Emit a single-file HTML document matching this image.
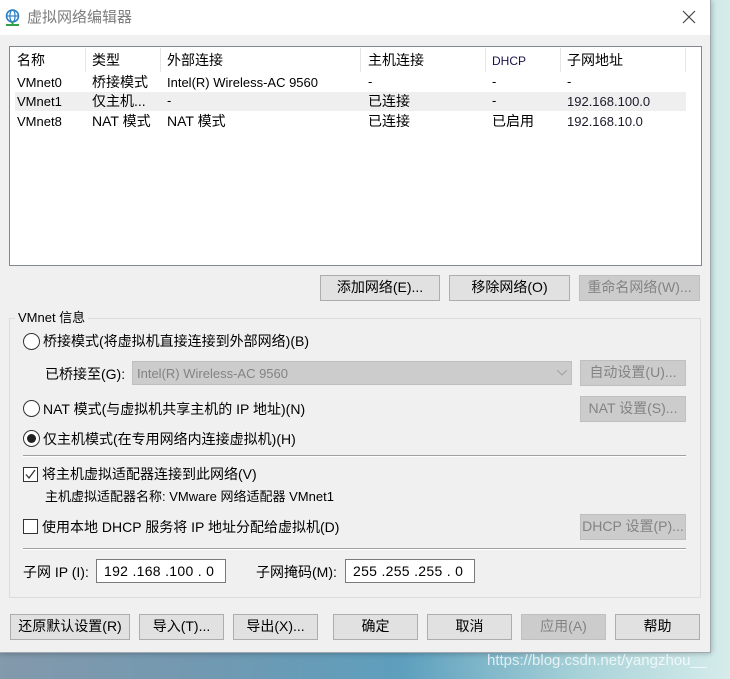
<!DOCTYPE html>
<html><head><meta charset="utf-8"><style>
*{box-sizing:border-box;margin:0;padding:0}
body{width:730px;height:679px;overflow:hidden;position:relative;font-family:"Liberation Sans","Noto Sans CJK SC",sans-serif;font-size:13px;color:#000;
background:linear-gradient(90deg,#8399ac 0%,#7099b2 30%,#5d9fbd 55%,#a9d3d9 80%,#d6eceb 100%);}
.abs{position:absolute}
#win{left:0;top:0;width:711px;height:653px;background:#f0f0f0;border-right:1px solid #a0a8b0;border-bottom:1px solid #a0a8b0;box-shadow:0 0 6px rgba(0,0,0,.3)}
#title{left:0;top:0;width:710px;height:35px;background:#fff}
.t{position:absolute;white-space:nowrap;line-height:16px}
.btn{position:absolute;background:#e1e1e1;border:1px solid #adadad;text-align:center;font-size:14px;line-height:23px;white-space:nowrap}
.dis{background:#cccccc;border-color:#bfbfbf;color:#838383}
.sep{position:absolute;height:2px;border-top:1px solid #a0a0a0;border-bottom:1px solid #fff}
.radio{position:absolute;width:17px;height:17px;border:1px solid #333;border-radius:50%;background:#fff}
.chk{position:absolute;width:15px;height:15px;border:1px solid #333;background:#fff}
.input{position:absolute;background:#fff;border:1px solid #7a7a7a;height:24px;font-size:14px;line-height:22px;padding-left:7px;letter-spacing:.3px}
</style></head><body>
<div id="win" class="abs">
 <div id="title" class="abs"></div>
 <svg class="abs" style="left:4px;top:9px" width="17" height="18" viewBox="0 0 17 18"><circle cx="8.5" cy="7" r="6" fill="none" stroke="#2a7fc7" stroke-width="1.6"/><ellipse cx="8.5" cy="7" rx="2.6" ry="6" fill="none" stroke="#2a7fc7" stroke-width="1.2"/><line x1="2.5" y1="7" x2="14.5" y2="7" stroke="#2a7fc7" stroke-width="1.2"/><rect x="2" y="15" width="13" height="2" fill="#35a048"/><rect x="7.5" y="13" width="2" height="3" fill="#35a048"/></svg>
 <div class="t" style="left:27px;top:9px;font-size:15px;color:#7d7d7d;line-height:18px">虚拟网络编辑器</div>
 <svg class="abs" style="left:682px;top:10px" width="14" height="14"><path d="M1 1L13 13M13 1L1 13" stroke="#444" stroke-width="1.2"/></svg>

 <!-- list -->
 <div class="abs" style="left:9px;top:46px;width:693px;height:220px;background:#fff;border:1px solid #828790"></div>
 <div class="abs" style="left:15px;top:92px;width:671px;height:19px;background:#efefef"></div>
 <div class="abs" style="left:85px;top:48px;width:1px;height:24px;background:#e5e5e5"></div>
 <div class="abs" style="left:160px;top:48px;width:1px;height:24px;background:#e5e5e5"></div>
 <div class="abs" style="left:360px;top:48px;width:1px;height:24px;background:#e5e5e5"></div>
 <div class="abs" style="left:485px;top:48px;width:1px;height:24px;background:#e5e5e5"></div>
 <div class="abs" style="left:560px;top:48px;width:1px;height:24px;background:#e5e5e5"></div>
 <div class="abs" style="left:685px;top:48px;width:1px;height:24px;background:#e5e5e5"></div>
 <div class="t" style="left:17px;top:52px;font-size:14px">名称</div>
 <div class="t" style="left:92px;top:52px;font-size:14px">类型</div>
 <div class="t" style="left:167px;top:52px;font-size:14px">外部连接</div>
 <div class="t" style="left:368px;top:52px;font-size:14px">主机连接</div>
 <div class="t" style="left:492px;top:53px;font-size:12px;color:#1a0f4a">DHCP</div>
 <div class="t" style="left:567px;top:52px;font-size:14px">子网地址</div>

 <div class="t" style="left:17px;top:75px">VMnet0</div><div class="t" style="left:92px;top:74px;font-size:14px">桥接模式</div><div class="t" style="left:167px;top:75px">Intel(R) Wireless-AC 9560</div><div class="t" style="left:368px;top:74px">-</div><div class="t" style="left:492px;top:74px">-</div><div class="t" style="left:567px;top:74px">-</div>
 <div class="t" style="left:17px;top:94px">VMnet1</div><div class="t" style="left:92px;top:93px;font-size:14px">仅主机...</div><div class="t" style="left:167px;top:93px">-</div><div class="t" style="left:368px;top:93px;font-size:14px">已连接</div><div class="t" style="left:492px;top:93px">-</div><div class="t" style="left:567px;top:94px;color:#1a1a2a">192.168.100.0</div>
 <div class="t" style="left:17px;top:114px">VMnet8</div><div class="t" style="left:92px;top:113px;font-size:14px">NAT 模式</div><div class="t" style="left:167px;top:113px;font-size:14px">NAT 模式</div><div class="t" style="left:368px;top:113px;font-size:14px">已连接</div><div class="t" style="left:492px;top:113px;font-size:14px">已启用</div><div class="t" style="left:567px;top:114px;color:#1a1a2a">192.168.10.0</div>

 <div class="btn" style="left:320px;top:275px;width:120px;height:26px">添加网络(E)...</div>
 <div class="btn" style="left:449px;top:275px;width:121px;height:26px">移除网络(O)</div>
 <div class="btn dis" style="left:579px;top:275px;width:121px;height:26px">重命名网络(W)...</div>

 <!-- group -->
 <div class="abs" style="left:9px;top:318px;width:692px;height:280px;border:1px solid #dcdcdc"></div>
 <div class="t" style="left:15px;top:310px;background:#f0f0f0;padding:0 3px;font-size:13px">VMnet 信息</div>

 <div class="radio" style="left:23px;top:333px"></div>
 <div class="t" style="left:43px;top:333px;font-size:14px">桥接模式(将虚拟机直接连接到外部网络)(B)</div>
 <div class="t" style="left:45px;top:366px;font-size:14px">已桥接至(G):</div>
 <div class="abs" style="left:132px;top:361px;width:440px;height:24px;background:#cccccc;border:1px solid #bfbfbf"></div>
 <div class="t" style="left:137px;top:366px;color:#838383">Intel(R) Wireless-AC 9560</div>
 <svg class="abs" style="left:557px;top:370px" width="10" height="6"><path d="M0 0L5 5L10 0" fill="none" stroke="#a0a0a0"/></svg>
 <div class="btn dis" style="left:580px;top:360px;width:106px;height:26px">自动设置(U)...</div>

 <div class="radio" style="left:23px;top:400px"></div>
 <div class="t" style="left:43px;top:401px;font-size:14px">NAT 模式(与虚拟机共享主机的 IP 地址)(N)</div>
 <div class="btn dis" style="left:580px;top:396px;width:106px;height:26px">NAT 设置(S)...</div>

 <div class="radio" style="left:23px;top:430px"><div style="position:absolute;left:3px;top:3px;width:9px;height:9px;border-radius:50%;background:#222"></div></div>
 <div class="t" style="left:43px;top:431px;font-size:14px">仅主机模式(在专用网络内连接虚拟机)(H)</div>

 <div class="sep" style="left:23px;top:455px;width:663px"></div>

 <div class="chk" style="left:23px;top:467px"><svg width="13" height="13" style="position:absolute;left:0;top:0"><path d="M2 6.5L5 10L11 2" fill="none" stroke="#333" stroke-width="1.3"/></svg></div>
 <div class="t" style="left:42px;top:466px;font-size:14px">将主机虚拟适配器连接到此网络(V)</div>
 <div class="t" style="left:45px;top:489px;font-size:13px">主机虚拟适配器名称: VMware 网络适配器 VMnet1</div>

 <div class="chk" style="left:23px;top:519px"></div>
 <div class="t" style="left:42px;top:519px;font-size:14px">使用本地 DHCP 服务将 IP 地址分配给虚拟机(D)</div>
 <div class="btn dis" style="left:580px;top:514px;width:106px;height:26px">DHCP 设置(P)...</div>

 <div class="sep" style="left:23px;top:548px;width:663px"></div>

 <div class="t" style="left:23px;top:564px;font-size:14px">子网 IP (I):</div>
 <div class="input" style="left:96px;top:559px;width:130px">192 .168 .100 . 0</div>
 <div class="t" style="left:256px;top:564px;font-size:14px">子网掩码(M):</div>
 <div class="input" style="left:345px;top:559px;width:130px">255 .255 .255 . 0</div>

 <div class="btn" style="left:10px;top:614px;width:120px;height:26px">还原默认设置(R)</div>
 <div class="btn" style="left:139px;top:614px;width:85px;height:26px">导入(T)...</div>
 <div class="btn" style="left:233px;top:614px;width:85px;height:26px">导出(X)...</div>
 <div class="btn" style="left:333px;top:614px;width:85px;height:26px">确定</div>
 <div class="btn" style="left:427px;top:614px;width:85px;height:26px">取消</div>
 <div class="btn dis" style="left:521px;top:614px;width:85px;height:26px">应用(A)</div>
 <div class="btn" style="left:615px;top:614px;width:85px;height:26px">帮助</div>
</div>
<div class="t" style="left:487px;top:653px;font-size:15px;color:rgba(255,255,255,.75)">https://blog.csdn.net/yangzhou__</div>
</body></html>
